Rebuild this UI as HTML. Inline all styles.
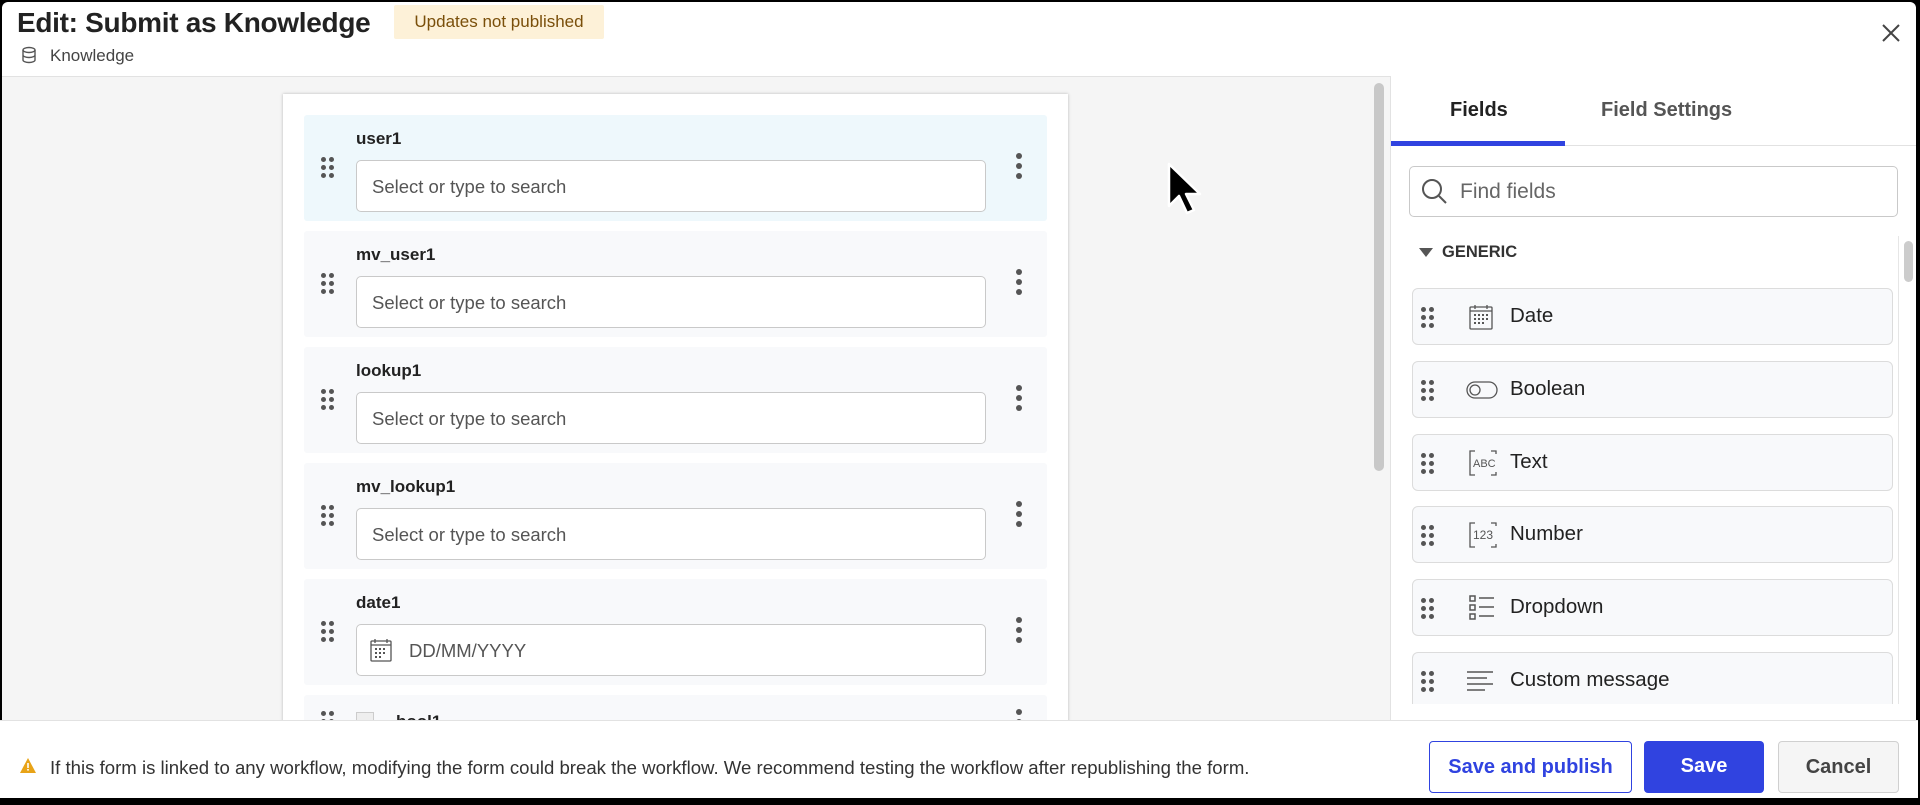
<!DOCTYPE html>
<html><head><meta charset="utf-8"><style>
*{box-sizing:border-box;margin:0;padding:0}
body{width:1920px;height:805px;background:#000;font-family:"Liberation Sans",sans-serif;position:relative;overflow:hidden;color:#222}
.a{position:absolute}
#win{left:2px;top:2px;width:1914px;height:796px;background:#fff;border-radius:6px;overflow:hidden}
.row{position:absolute;left:304px;width:743px;height:106px;background:#f8f9fb;border-radius:3px}
.row .lbl{position:absolute;left:52px;top:14px;font-weight:bold;font-size:17px;color:#222}
.row .inp{position:absolute;left:52px;top:45px;width:630px;height:52px;border:1px solid #c9c9c9;border-radius:5px;background:#fff;font-size:18.5px;color:#555;padding:15px 0 0 15px}
.dots{position:absolute;width:14px;height:22px}
.dots i{position:absolute;width:5px;height:5px;border-radius:50%;background:#555}
.keb i{position:absolute;left:0;width:6px;height:6px;border-radius:50%;background:#555}
.item{position:absolute;left:1412px;width:481px;height:57px;background:#f8f9fb;border:1px solid #dcdcdc;border-radius:6px}
.item .t{position:absolute;left:97px;top:15px;font-size:20.5px;color:#222}
.item svg{position:absolute;left:56px;top:15px}
.btn{position:absolute;top:741px;height:52px;border-radius:4px;font-size:20px;font-weight:bold;text-align:center;line-height:50px}
</style></head><body>
<div id="win" class="a">
<div class="a" style="left:15px;top:5px;font-size:28px;font-weight:bold;color:#222;letter-spacing:-0.3px">Edit: Submit as Knowledge</div>
<div class="a" style="left:392px;top:3px;width:210px;height:34px;background:#fdf1d8;color:#7a4f0a;font-size:17px;line-height:34px;text-align:center;border-radius:2px">Updates not published</div>
<svg class="a" style="left:19px;top:44px" width="16" height="18" viewBox="0 0 16 18" fill="none" stroke="#555" stroke-width="1.4"><ellipse cx="8" cy="4" rx="6" ry="2.5"/><path d="M2 4v10c0 1.4 2.7 2.5 6 2.5s6-1.1 6-2.5V4M2 9c0 1.4 2.7 2.5 6 2.5S14 10.4 14 9"/></svg>
<div class="a" style="left:48px;top:44px;font-size:17px;color:#444">Knowledge</div>
<svg class="a" style="left:1879px;top:21px" width="20" height="20" viewBox="0 0 20 20" stroke="#444" stroke-width="2"><path d="M2 2l16 16M18 2L2 18"/></svg>
<div class="a" style="left:0;top:74px;width:1914px;height:1px;background:#e2e2e2"></div>
<div class="a" style="left:0;top:75px;width:1389px;height:645px;background:#f5f5f5"></div>
<div class="a" style="left:281px;top:92px;width:785px;height:640px;background:#fff;box-shadow:0 0 3px rgba(0,0,0,.25)"></div>
</div>

<div class="row" style="top:115px;background:#eef8fc"><div class="lbl">user1</div><div class="inp">Select or type to search</div></div>
<div class="row" style="top:231px"><div class="lbl">mv_user1</div><div class="inp">Select or type to search</div></div>
<div class="row" style="top:347px"><div class="lbl">lookup1</div><div class="inp">Select or type to search</div></div>
<div class="row" style="top:463px"><div class="lbl">mv_lookup1</div><div class="inp">Select or type to search</div></div>
<div class="row" style="top:579px"><div class="lbl">date1</div><div class="inp" style="padding-left:52px">DD/MM/YYYY</div>
<svg class="a" style="left:66px;top:59px" width="22" height="24" viewBox="0 0 22 24" fill="none" stroke="#555" stroke-width="1.3"><rect x="1" y="3" width="20" height="20" rx="1"/><path d="M5 1v4M17 1v4M1 7h20"/><g fill="#555" stroke="none"><rect x="5" y="10" width="2" height="2"/><rect x="9" y="10" width="2" height="2"/><rect x="13" y="10" width="2" height="2"/><rect x="5" y="14" width="2" height="2"/><rect x="9" y="14" width="2" height="2"/><rect x="13" y="14" width="2" height="2"/><rect x="5" y="18" width="2" height="2"/><rect x="9" y="18" width="2" height="2"/></g></svg></div>
<div class="row" style="top:695px;height:30px"><div class="lbl" style="left:92px;top:17px">bool1</div><div class="a" style="left:52px;top:17px;width:18px;height:18px;border:1px solid #ccc;background:#eee"></div></div>

<div id="dd"></div>
<div class="a" style="left:0;top:720px;width:1918px;height:78px;background:#fff;border-top:1px solid #e2e2e2"></div>
<div class="a" style="left:1374px;top:83px;width:10px;height:388px;background:#c8c8c8;border-radius:5px"></div>
<div class="a" style="left:1390px;top:76px;width:526px;height:644px;background:#fff;border-left:1px solid #e2e2e2"></div>
<div class="a" style="left:1391px;top:145px;width:525px;height:1px;background:#e2e2e2"></div>
<div class="a" style="left:1391px;top:141px;width:174px;height:5px;background:#3043e0"></div>
<div class="a" style="left:1450px;top:99px;font-size:20px;font-weight:bold;color:#222">Fields</div>
<div class="a" style="left:1601px;top:99px;font-size:20px;font-weight:bold;color:#555">Field Settings</div>
<div class="a" style="left:1409px;top:166px;width:489px;height:51px;border:1px solid #c9c9c9;border-radius:5px"></div>
<svg class="a" style="left:1421px;top:178px" width="28" height="28" viewBox="0 0 28 28" fill="none" stroke="#555" stroke-width="2"><circle cx="11" cy="11" r="9"/><path d="M18 18l7 7"/></svg>
<div class="a" style="left:1460px;top:180px;font-size:21px;color:#666">Find fields</div>
<svg class="a" style="left:1419px;top:248px" width="14" height="10"><path d="M0 0h14L7 9z" fill="#555"/></svg>
<div class="a" style="left:1442px;top:243px;font-size:16.5px;font-weight:bold;color:#333">GENERIC</div>
<div class="a" style="left:1898px;top:236px;width:1px;height:468px;background:#e6e6e6"></div>
<div class="a" style="left:1904px;top:241px;width:9px;height:41px;background:#ccc;border-radius:5px"></div>

<div class="item" style="top:288px"><div class="t">Date</div><svg width="24" height="26" viewBox="0 0 24 26" fill="none" stroke="#555" stroke-width="1.3"><rect x="1" y="3" width="22" height="22" rx="1"/><path d="M6 1v4M18 1v4M1 7h22"/><g fill="#555" stroke="none"><rect x="5" y="10" width="2" height="2"/><rect x="9" y="10" width="2" height="2"/><rect x="13" y="10" width="2" height="2"/><rect x="17" y="10" width="2" height="2"/><rect x="5" y="14" width="2" height="2"/><rect x="9" y="14" width="2" height="2"/><rect x="13" y="14" width="2" height="2"/><rect x="17" y="14" width="2" height="2"/><rect x="5" y="18" width="2" height="2"/><rect x="9" y="18" width="2" height="2"/><rect x="13" y="18" width="2" height="2"/></g></svg></div>
<div class="item" style="top:361px"><div class="t">Boolean</div><svg style="top:19px;left:53px" width="32" height="18" viewBox="0 0 32 18" fill="none" stroke="#555" stroke-width="1.3"><rect x="1" y="1" width="30" height="16" rx="8"/><circle cx="9" cy="9" r="5"/></svg></div>
<div class="item" style="top:434px"><div class="t">Text</div><svg width="28" height="26" viewBox="0 0 28 26" fill="none" stroke="#555" stroke-width="1.3"><path d="M6 1H1v24h5M22 1h5v3M22 25h5v-3"/><text x="4" y="17" font-size="11" fill="#555" stroke="none" font-family="Liberation Sans">ABC</text></svg></div>
<div class="item" style="top:506px"><div class="t">Number</div><svg width="28" height="26" viewBox="0 0 28 26" fill="none" stroke="#555" stroke-width="1.3"><path d="M6 1H1v24h5M22 1h5v3M22 25h5v-3"/><text x="4" y="17" font-size="12" fill="#555" stroke="none" font-family="Liberation Sans">123</text></svg></div>
<div class="item" style="top:579px"><div class="t">Dropdown</div><svg width="26" height="26" viewBox="0 0 26 26" fill="none" stroke="#555" stroke-width="1.5"><rect x="1" y="1" width="5" height="5"/><rect x="1" y="10" width="5" height="5"/><rect x="1" y="19" width="5" height="5"/><path d="M10 3h15M10 12h15M10 21h15"/></svg></div>
<div class="item" style="top:652px;height:52px;border-bottom:none;border-radius:6px 6px 0 0"><div class="t">Custom message</div><svg style="left:54px;top:18px" width="26" height="20" viewBox="0 0 26 20" stroke="#555" stroke-width="1.5"><path d="M0 1h26M0 7h20M0 13h26M0 19h18"/></svg></div>
<div id="dd2"></div>

<svg class="a" style="left:20px;top:758px" width="16" height="15" viewBox="0 0 16 15"><path d="M8 0l8 15H0z" fill="#e8a317"/><rect x="7.2" y="5" width="1.6" height="5" fill="#fff"/><rect x="7.2" y="11" width="1.6" height="1.6" fill="#fff"/></svg>
<div class="a" style="left:50px;top:757px;font-size:18.6px;color:#333">If this form is linked to any workflow, modifying the form could break the workflow. We recommend testing the workflow after republishing the form.</div>
<div class="btn" style="left:1429px;width:203px;border:1.5px solid #3043e0;color:#3043e0;background:#fff">Save and publish</div>
<div class="btn" style="left:1644px;width:120px;background:#3043e0;color:#fff">Save</div>
<div class="btn" style="left:1778px;width:121px;background:#f5f5f5;border:1.5px solid #d0d0d0;color:#444">Cancel</div>

<svg class="a" style="left:1166px;top:161px" width="36" height="54" viewBox="0 0 36 54"><path d="M3 3v42l10-10 8 17 7-3-8-16h14z" fill="#000" stroke="#fff" stroke-width="2.5" stroke-linejoin="round"/></svg>

<script>
function dots(x,y){let s='<div class="dots" style="left:'+x+'px;top:'+y+'px">';for(let r=0;r<3;r++)for(let c=0;c<2;c++)s+='<i style="left:'+(c*8)+'px;top:'+(r*8)+'px"></i>';return s+'</div>';}
function keb(x,y){return '<div class="keb a" style="left:'+x+'px;top:'+y+'px;width:6px;height:26px"><i style="top:0"></i><i style="top:10px"></i><i style="top:20px"></i></div>';}
let h='';
[115,231,347,463,579].forEach(t=>{h+=dots(321,t+42);h+=keb(1016,t+38);});
h+=dots(321,711);h+=keb(1016,709);
document.getElementById('dd').outerHTML=h;
let h2='';
[288,361,434,506,579,652].forEach(t=>{h2+=dots(1421,t+19);});
document.getElementById('dd2').outerHTML=h2;
</script>
</body></html>
